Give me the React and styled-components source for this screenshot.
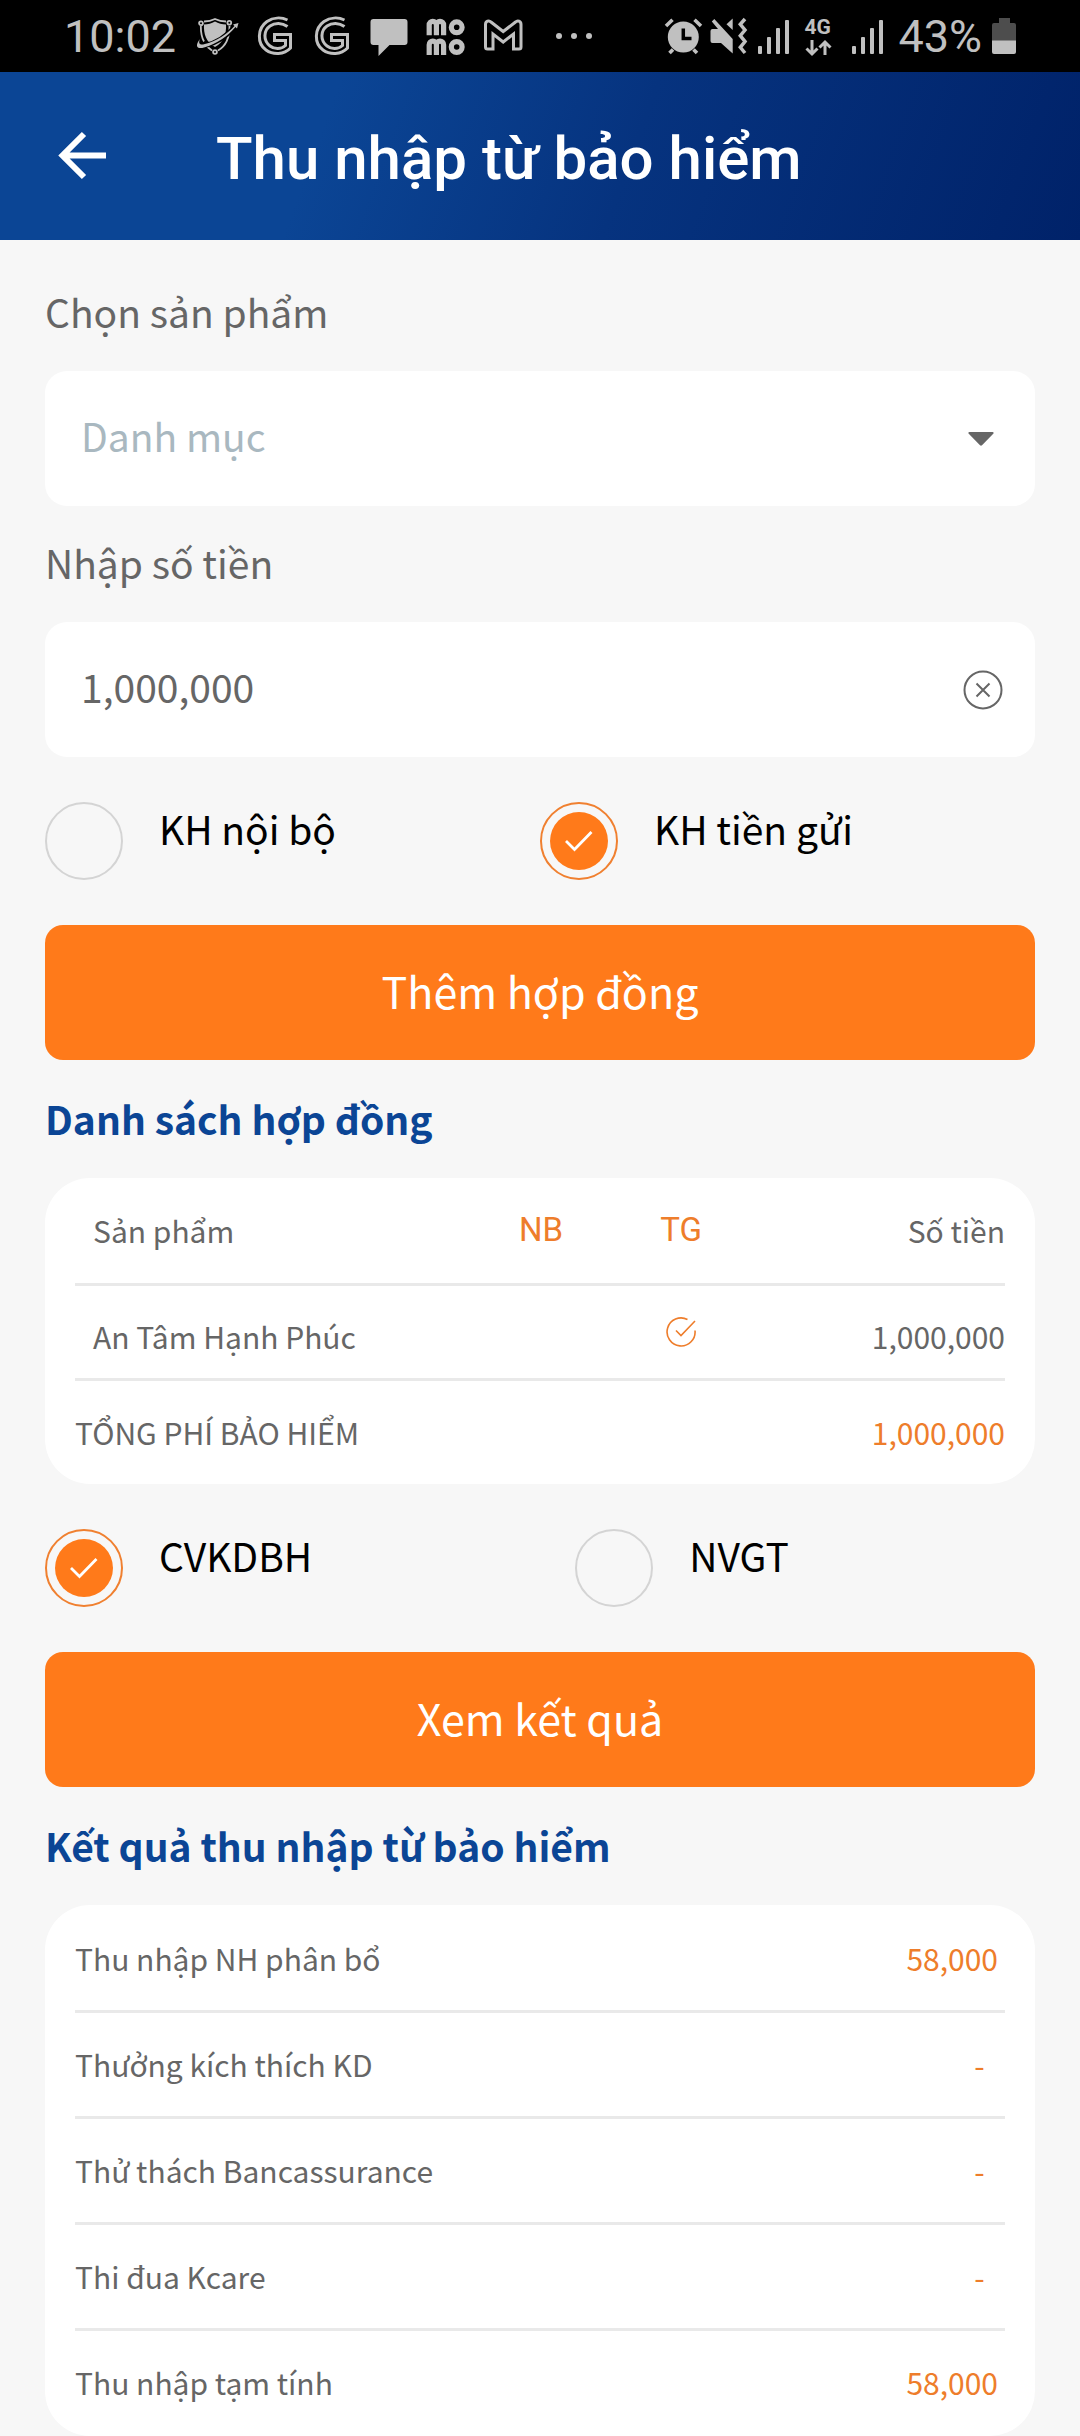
import React, { useState } from "react";
import styled, { createGlobalStyle } from "styled-components";

const color = {
  page: "#f7f7f7",
  card: "#ffffff",
  blue: "#0b4595",
  orange: "#ff7a1a",
  amount: "#ee7d2b",
  text: "#666666",
  placeholder: "#a9b8c0",
  line: "#e9e9e9",
  status: "#c0c0c0",
};

const GlobalStyle = createGlobalStyle`
  *, *::before, *::after { box-sizing: border-box; }
  body {
    margin: 0;
    background: ${color.page};
    color: ${color.text};
    font-family: "Noto Sans CJK SC", "Noto Sans", sans-serif;
  }
  button, input, select { font: inherit; color: inherit; }
`;

/* ---------- Status bar ---------- */

const StatusBar = styled.div`
  display: flex;
  justify-content: space-between;
  align-items: center;
  height: 72px;
  padding: 0 64px;
  background: #000;
  color: ${color.status};
  font-family: Roboto, sans-serif;
`;

const StatusGroup = styled.div`
  display: flex;
  align-items: center;
  gap: ${(p) => p.$gap}px;
`;

const StatusText = styled.span`
  padding-top: 2px;
  font-size: 45px;
  line-height: 52px;
  margin-right: ${(p) => p.$after || 0}px;
`;

const StatusIcon = styled.svg`
  display: block;
  flex: none;
  overflow: visible;
  fill: ${(p) => (p.$outline ? "none" : color.status)};
  stroke: ${(p) => (p.$outline ? color.status : "none")};
  stroke-width: 3;
`;

const Network = styled.div`
  display: flex;
  flex-direction: column;
  align-items: flex-start;
  gap: 4px;
  width: 38px;
  padding-top: 2px;
  font-size: 21px;
  font-weight: 700;
  line-height: 17px;
`;

const ShieldIcon = () => (
  <StatusIcon width="42" height="42" viewBox="0 0 42 42">
    <path d="M18 6.5C21.500 8.500 25 9.500 29 9.500C29.500 19 27 27 18 32C9 27 6.500 19 7 9.500C11 9.500 14.500 8.500 18 6.500Z" />
    <g fill="none" stroke={color.status} strokeWidth="1.800">
      <path d="M7 6.500C11 6.500 15 5.500 18 4C21 5.500 25 6.500 29 6.500" />
      <path d="M3.800 11C3.800 17 4.500 22 7 26.500M32.500 11C32.600 22 29 31 21 35.500M10 31.500L15 35.500" />
      <circle cx="4" cy="8.300" r="1.900" />
      <circle cx="32.300" cy="7.700" r="1.900" />
      <circle cx="18" cy="37" r="1.900" />
    </g>
    <path d="M3 26C2 31 3 32 7 31C20 28 31 20 38.500 11" fill="none" stroke="#000" strokeWidth="5" />
    <path d="M3 24C-2.500 31 0 34.500 7 32.500C20 29 31 21 38.500 12L40 13.500L41.500 8L36 9.500L37.500 11C30 19 20 26 7 29.300C3 30.200 1 28.500 3 24Z" />
  </StatusIcon>
);

const DoubleGIcon = () => (
  <StatusIcon $outline width="42" height="42" viewBox="0 0 42 42">
    <path d="M33.500 5C27 2 19 2.500 13 6.500C3 13.500 3 28.500 12 35C19 40 30 40 36.500 33V19.500H20.500V25.500H31.500V30.500C27 34.500 20.500 34.500 16 31C9 25.500 9.500 15.500 16 11C21 7.500 28 7.500 33.500 11.500" />
  </StatusIcon>
);

const ChatIcon = () => (
  <StatusIcon width="42" height="42" viewBox="0 0 42 42">
    <path d="M5.500 4H36.500A3 3 0 0 1 39.500 7V27A3 3 0 0 1 36.500 30H21.500L10.500 41V30H5.500A3 3 0 0 1 2.500 27V7A3 3 0 0 1 5.500 4Z" />
  </StatusIcon>
);

const MomoIcon = () => (
  <StatusIcon $outline width="42" height="42" viewBox="0 0 42 42">
    {[0, 19.7].map((y) => (
      <g key={y} transform={`translate(0 ${y})`} strokeWidth="5.200">
        <path d="M4.200 20.300V10a3.600 3.600 0 0 1 7.200 0V20.300M11.400 10a3.600 3.600 0 0 1 7.200 0V20.300" />
        <circle cx="31.700" cy="12.300" r="5.400" />
      </g>
    ))}
  </StatusIcon>
);

const MailIcon = () => (
  <StatusIcon $outline width="42" height="42" viewBox="0 0 42 42">
    <path d="M5.500 34a2 2 0 0 1-2-2V9.500C3.500 6 7 5 9 7L21.200 16.500L33.500 7C35.500 5 39 6 39 9.500V32a2 2 0 0 1-2 2H31.500V19L21.200 27L11 19V34Z" />
  </StatusIcon>
);

const MoreIcon = () => (
  <StatusIcon width="70" height="42" viewBox="0 0 70 42">
    <circle cx="20" cy="21" r="3" />
    <circle cx="35" cy="21" r="3" />
    <circle cx="50" cy="21" r="3" />
  </StatusIcon>
);

const AlarmIcon = () => (
  <StatusIcon width="36" height="36" viewBox="0 0 36 36">
    <circle cx="19.300" cy="19" r="15.500" />
    <g fill="none" stroke={color.status} strokeWidth="3.600">
      <path d="M2 8L8.500 1.700M30.500 1.700L37 8M9 31.500L5.500 35M29.500 31.500L33 35" />
    </g>
    <path d="M19.300 10.500V20.500H27.500" fill="none" stroke="#000" strokeWidth="3.500" />
  </StatusIcon>
);

const MutedIcon = () => (
  <StatusIcon width="38" height="36" viewBox="0 0 38 36">
    <path d="M.5 13Q.5 11 2.500 11H8L1.800 3.500L4.300 1L22.700 21V35.500L11 25H2.500Q.5 25 .5 23Z" />
    <path d="M22.700 .5V12L16.500 6.300Z" />
    <path d="M35 1L30.300 6.300L35 12L30.300 17.700L35 23.500L30.300 29.300L35 35" fill="none" stroke={color.status} strokeWidth="3.500" />
  </StatusIcon>
);

const SignalIcon = () => (
  <StatusIcon width="36" height="36" viewBox="0 0 36 36">
    <rect x="0" y="28" width="4" height="8" rx="1" />
    <rect x="9" y="19" width="4" height="17" rx="1" />
    <rect x="18" y="10" width="4" height="26" rx="1" />
    <rect x="27" y="2" width="4" height="34" rx="1" />
  </StatusIcon>
);

const DataArrowsIcon = () => (
  <StatusIcon $outline width="28" height="16" viewBox="0 0 28 16">
    <path d="M8 0V14M2.500 8.500L8 14L13.500 8.500M21 15V2M15.500 7.500L21 2L26.500 7.500" />
  </StatusIcon>
);

const BatteryIcon = () => (
  <StatusIcon width="24" height="36" viewBox="0 0 24 36">
    <path d="M7 0H18V5H22Q24 5 24 7V23H0V7Q0 5 2 5H7Z" fill="#4d4d4d" />
    <path d="M0 22.500H24V34Q24 36 22 36H2Q0 36 0 34Z" />
  </StatusIcon>
);

/* ---------- Header ---------- */

const Header = styled.header`
  display: flex;
  align-items: center;
  gap: 110px;
  height: 168px;
  padding: 0 58px;
  background: linear-gradient(110deg, #0b4595 30%, #06337f 58%, #002269 100%);
  color: #fff;
`;

const BackButton = styled.button`
  display: block;
  width: 48px;
  height: 50px;
  padding: 0;
  border: 0;
  background: none;
`;

const Title = styled.h1`
  margin: 0;
  padding-top: 6px;
  font: 500 60px/72px Roboto, sans-serif;
`;

/* ---------- Form ---------- */

const Page = styled.main`
  padding: 45px 45px 0;
`;

const FieldLabel = styled.label`
  display: block;
  margin-bottom: 34px;
  font-size: 39px;
  line-height: 52px;
`;

const Field = styled.div`
  display: grid;
  grid-template-columns: 1fr auto;
  align-items: center;
  height: 135px;
  margin-bottom: ${(p) => p.$after}px;
  border-radius: 22px;
  background: ${color.card};
`;

const controlText = `
  grid-row: 1;
  min-width: 0;
  height: 100%;
  padding: 0 36px 8px;
  border: 0;
  outline: 0;
  background: none;
  font-size: 39px;
`;

const CategorySelect = styled.select`
  ${controlText}
  grid-column: 1 / -1;
  appearance: none;
  color: ${color.placeholder};
`;

const Caret = styled.svg`
  grid-area: 1 / 2;
  margin-right: 41px;
  pointer-events: none;
`;

const AmountInput = styled.input`
  ${controlText}
  grid-column: 1;
`;

const ClearButton = styled.button`
  grid-area: 1 / 2;
  display: block;
  width: 40px;
  height: 40px;
  margin-right: 32px;
  padding: 0;
  border: 0;
  background: none;
`;

const Choices = styled.div`
  display: grid;
  grid-template-columns: ${(p) => p.$columns};
  margin: 45px 0;
`;

const Choice = styled.label`
  display: flex;
  align-items: flex-start;
  gap: 36px;
  color: #000;
  font-size: 39px;
  line-height: 52px;
`;

const RadioBox = styled.span`
  display: grid;
  flex: none;
  width: 78px;
  height: 78px;
`;

const RadioInput = styled.input`
  grid-area: 1 / 1;
  width: 78px;
  height: 78px;
  margin: 0;
  appearance: none;
  border: 2px solid #d4d4d4;
  border-radius: 50%;

  &:checked {
    border-color: #f08030;
  }
  &:not(:checked) + svg {
    visibility: hidden;
  }
`;

const RadioMark = styled.svg`
  grid-area: 1 / 1;
  pointer-events: none;
`;

const ActionButton = styled.button`
  display: block;
  width: 100%;
  height: 135px;
  padding: 0 0 6px;
  border: 0;
  border-radius: 18px;
  background: ${color.orange};
  color: #fff;
  font-size: 43px;
`;

const SectionTitle = styled.h2`
  margin: 32px 0 34px;
  color: ${color.blue};
  font-size: 39px;
  font-weight: 700;
  line-height: 52px;
`;

/* ---------- Cards ---------- */

const Card = styled.section`
  padding: ${(p) => p.$inset || 0}px 30px;
  border-radius: 45px;
  background: ${color.card};
`;

const DataTable = styled.table`
  width: 100%;
  table-layout: fixed;
  border-collapse: separate;
  border-spacing: 0;
  font-size: 30px;
  line-height: 44px;
`;

const Column = styled.col`
  width: ${(p) => p.$width}px;
`;

const Row = styled.tr`
  height: ${(p) => p.$height}px;

  & > * {
    padding: 0 0 2px;
    font-weight: 400;
    text-align: left;
    border-bottom: ${(p) => (p.$last ? "0" : `3px solid ${color.line}`)};
  }
  & > *:first-child {
    padding-left: ${(p) => p.$indent || 0}px;
  }
`;

const Cell = styled.td`
  && {
    padding-top: ${(p) => p.$drop || 0}px;
    padding-right: ${(p) => p.$inset || 0}px;
    text-align: ${(p) => p.$align || "left"};
  }
  color: ${(p) => (p.$accent ? color.amount : "inherit")};
`;

const MarkHeading = styled(Cell)`
  font-family: Roboto, sans-serif;
  font-size: 33px;
`;

const CheckIcon = styled.svg`
  display: block;
  margin: 0 auto;
`;

function RadioChoice({ name, label, checked, onSelect }) {
  return (
    <Choice>
      <RadioBox>
        <RadioInput type="radio" name={name} checked={checked} onChange={onSelect} />
        <RadioMark width="78" height="78" viewBox="0 0 78 78" aria-hidden="true">
          <circle cx="39" cy="39" r="29" fill={color.orange} />
          <path d="M26 39L34.500 47.500L51.500 30" fill="none" stroke="#fff" strokeWidth="2.800" />
        </RadioMark>
      </RadioBox>
      {label}
    </Choice>
  );
}

const results = [
  ["Thu nhập NH phân bổ", "58,000"],
  ["Thưởng kích thích KD", null],
  ["Thử thách Bancassurance", null],
  ["Thi đua Kcare", null],
  ["Thu nhập tạm tính", "58,000"],
];

export default function App() {
  const [amount, setAmount] = useState("1,000,000");
  const [customer, setCustomer] = useState("TG");
  const [role, setRole] = useState("CVKDBH");

  return (
    <>
      <GlobalStyle />
      <StatusBar>
        <StatusGroup $gap={15}>
          <StatusText $after={6}>10:02</StatusText>
          <ShieldIcon />
          <DoubleGIcon />
          <DoubleGIcon />
          <ChatIcon />
          <MomoIcon />
          <MailIcon />
          <MoreIcon />
        </StatusGroup>
        <StatusGroup $gap={10}>
          <AlarmIcon />
          <MutedIcon />
          <SignalIcon />
          <Network>
            <span>4G</span>
            <DataArrowsIcon />
          </Network>
          <SignalIcon />
          <StatusText>43%</StatusText>
          <BatteryIcon />
        </StatusGroup>
      </StatusBar>

      <Header>
        <BackButton type="button" aria-label="Quay lại">
          <svg width="48" height="50" viewBox="0 0 48 50" fill="none" stroke="#fff" strokeWidth="6">
            <path d="M26 3L4.500 24.500L26 46M4 24.500H48" />
          </svg>
        </BackButton>
        <Title>Thu nhập từ bảo hiểm</Title>
      </Header>

      <Page>
        <FieldLabel htmlFor="category">Chọn sản phẩm</FieldLabel>
        <Field $after={30}>
          <CategorySelect id="category">
            <option>Danh mục</option>
          </CategorySelect>
          <Caret width="26" height="14" viewBox="0 0 26 14" aria-hidden="true">
            <path d="M1.500 0H24.500Q26.500 .5 25 2L14 13.300Q13 14 12 13.300L1 2Q-.5 .5 1.500 0Z" fill="#666" />
          </Caret>
        </Field>

        <FieldLabel htmlFor="amount">Nhập số tiền</FieldLabel>
        <Field $after={45}>
          <AmountInput id="amount" type="text" value={amount} onChange={(e) => setAmount(e.target.value)} />
          <ClearButton type="button" aria-label="Xóa" onClick={() => setAmount("")}>
            <svg width="40" height="40" viewBox="0 0 40 40" fill="none" stroke="#666" strokeWidth="2">
              <circle cx="20" cy="20" r="18.500" />
              <path d="M13.500 13.500L26.500 26.500M26.500 13.500L13.500 26.500" />
            </svg>
          </ClearButton>
        </Field>

        <Choices $columns="1fr 1fr">
          <RadioChoice name="customer" label="KH nội bộ" checked={customer === "NB"} onSelect={() => setCustomer("NB")} />
          <RadioChoice name="customer" label="KH tiền gửi" checked={customer === "TG"} onSelect={() => setCustomer("TG")} />
        </Choices>

        <ActionButton type="button">Thêm hợp đồng</ActionButton>

        <SectionTitle>Danh sách hợp đồng</SectionTitle>
        <Card>
          <DataTable>
            <colgroup>
              <col />
              <Column $width={140} />
              <Column $width={140} />
              <Column $width={254} />
            </colgroup>
            <thead>
              <Row $height={108} $indent={18}>
                <th scope="col">Sản phẩm</th>
                <MarkHeading as="th" scope="col" $align="center" $accent>NB</MarkHeading>
                <MarkHeading as="th" scope="col" $align="center" $accent>TG</MarkHeading>
                <Cell as="th" scope="col" $align="right">Số tiền</Cell>
              </Row>
            </thead>
            <tbody>
              <Row $height={95} $indent={18}>
                <Cell $drop={9}>An Tâm Hạnh Phúc</Cell>
                <Cell />
                <Cell $align="center" $drop={2}>
                  <CheckIcon width="30" height="30" viewBox="0 0 30 30" fill="none" stroke={color.amount} strokeWidth="1.600" role="img" aria-label="TG">
                    <path d="M21.500 2.500A14 14 0 1 0 29 13.500M10 13.500L15 18.500L29 4" />
                  </CheckIcon>
                </Cell>
                <Cell $align="right" $drop={9}>1,000,000</Cell>
              </Row>
            </tbody>
            <tfoot>
              <Row $height={103} $last>
                <th scope="row" colSpan="3">TỔNG PHÍ BẢO HIỂM</th>
                <Cell $align="right" $accent>1,000,000</Cell>
              </Row>
            </tfoot>
          </DataTable>
        </Card>

        <Choices $columns="15fr 13fr">
          <RadioChoice name="role" label="CVKDBH" checked={role === "CVKDBH"} onSelect={() => setRole("CVKDBH")} />
          <RadioChoice name="role" label="NVGT" checked={role === "NVGT"} onSelect={() => setRole("NVGT")} />
        </Choices>

        <ActionButton type="button">Xem kết quả</ActionButton>

        <SectionTitle>Kết quả thu nhập từ bảo hiểm</SectionTitle>
        <Card $inset={2}>
          <DataTable>
            <colgroup>
              <col />
              <Column $width={254} />
            </colgroup>
            <tbody>
              {results.map(([name, value], i) => {
                const last = i === results.length - 1;
                return (
                  <Row key={name} $height={last ? 103 : 106} $last={last}>
                    <th scope="row">{name}</th>
                    <Cell $align="right" $inset={7} $accent>
                      {value || "-\u00a0\u00a0"}
                    </Cell>
                  </Row>
                );
              })}
            </tbody>
          </DataTable>
        </Card>
      </Page>
    </>
  );
}
